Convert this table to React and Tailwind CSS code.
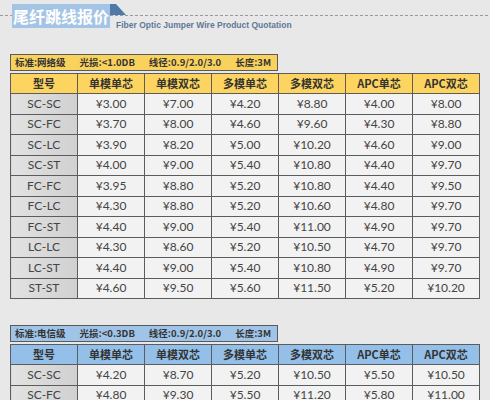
const cols = ["型号", "单模单芯", "单模双芯", "多模单芯", "多模双芯", "APC单芯", "APC双芯"];

const netRows = [
  ["SC-SC", "3.00", "7.00", "4.20", "8.80", "4.00", "8.00"],
  ["SC-FC", "3.70", "8.00", "4.60", "9.60", "4.30", "8.80"],
  ["SC-LC", "3.90", "8.20", "5.00", "10.20", "4.60", "9.00"],
  ["SC-ST", "4.00", "9.00", "5.40", "10.80", "4.40", "9.70"],
  ["FC-FC", "3.95", "8.80", "5.20", "10.80", "4.40", "9.50"],
  ["FC-LC", "4.30", "8.80", "5.20", "10.60", "4.80", "9.70"],
  ["FC-ST", "4.40", "9.00", "5.40", "11.00", "4.90", "9.70"],
  ["LC-LC", "4.30", "8.60", "5.20", "10.50", "4.70", "9.70"],
  ["LC-ST", "4.40", "9.00", "5.40", "10.80", "4.90", "9.70"],
  ["ST-ST", "4.60", "9.50", "5.60", "11.50", "5.20", "10.20"],
];

const telRows = [
  ["SC-SC", "4.20", "8.70", "5.20", "10.50", "5.50", "10.50"],
  ["SC-FC", "4.80", "9.30", "5.50", "11.20", "5.80", "11.00"],
  ["SC-LC", "5.00", "9.50", "5.80", "11.50", "6.00", "11.50"],
];

function LabelBar({ grade, loss, tone }) {
  const bg = tone === "yellow" ? "bg-[#f9d25e]" : "bg-[#9fc4e8]";
  return (
    <div
      className={`ml-[10px] flex h-[17px] w-[268px] items-center gap-[14px] border border-[#5a5a5a] ${bg} pl-[4px] text-[9.5px] font-bold text-[#333]`}
      style={{ fontFamily: '"Noto Sans CJK SC", sans-serif' }}
    >
      <span>标准:{grade}</span>
      <span>光损:{loss}</span>
      <span>线径:0.9/2.0/3.0</span>
      <span>长度:3M</span>
    </div>
  );
}

function PriceTable({ rows, tone }) {
  const head = tone === "yellow" ? "bg-[#fcd45f]" : "bg-[#93bfe9]";
  return (
    <table
      className="mt-[2px] ml-[10px] w-[470px] table-fixed border-collapse text-[12px] text-[#444]"
      style={{ fontFamily: "Lato, sans-serif" }}
    >
      <thead>
        <tr className="h-[20px]">
          {cols.map((c) => (
            <th
              key={c}
              className={`border border-[#5c5c5c] ${head} p-0 text-[11px] font-bold text-[#333]`}
              style={{ fontFamily: '"Noto Sans CJK SC", sans-serif' }}
            >
              {c}
            </th>
          ))}
        </tr>
      </thead>
      <tbody>
        {rows.map((r) => (
          <tr key={r[0]} className="h-[20.5px]">
            {r.map((v, i) =>
              i === 0 ? (
                <td
                  key={i}
                  className="border border-[#5c5c5c] bg-gradient-to-r from-[#e2e2e2] to-[#d0d0d0] p-0 text-center"
                >
                  {v}
                </td>
              ) : (
                <td key={i} className="border border-[#5c5c5c] bg-[#f2f2f2] p-0 text-center">
                  ¥{v}
                </td>
              )
            )}
          </tr>
        ))}
      </tbody>
    </table>
  );
}

export default function App() {
  return (
    <div className="h-[400px] w-[490px] overflow-hidden bg-[#e8e8e8]">
      <div className="relative h-[32px]">
        <div className="absolute top-[15px] left-0 w-[488px] border-t border-dashed border-[#9a9a9a]" />
        <div
          className="absolute top-[4px] left-[12px] flex h-[24px] w-[98px] items-center justify-center bg-[#a3c4e5] text-[16px] font-bold text-white"
          style={{ fontFamily: '"Noto Sans CJK SC", sans-serif' }}
        >
          尾纤跳线报价
        </div>
        <svg className="absolute top-[4px] left-[110px]" width="16" height="12" viewBox="0 0 16 12">
          <polygon points="0,0 6,0 16,11 0,11" fill="#4f7aa8" />
        </svg>
        <div
          className="absolute top-[19px] left-[116px] bg-[#e8e8e8] pr-[2px] text-[8.5px] font-bold text-[#5f7898]"
          style={{ fontFamily: '"Liberation Sans", Arial, sans-serif' }}
        >
          Fiber Optic Jumper Wire Product Quotation
        </div>
      </div>
      <div className="pt-[22px]">
        <LabelBar grade="网络级" loss="<1.0DB" tone="yellow" />
        <PriceTable rows={netRows} tone="yellow" />
      </div>
      <div className="pt-[26px]">
        <LabelBar grade="电信级" loss="<0.3DB" tone="blue" />
        <PriceTable rows={telRows} tone="blue" />
      </div>
    </div>
  );
}
